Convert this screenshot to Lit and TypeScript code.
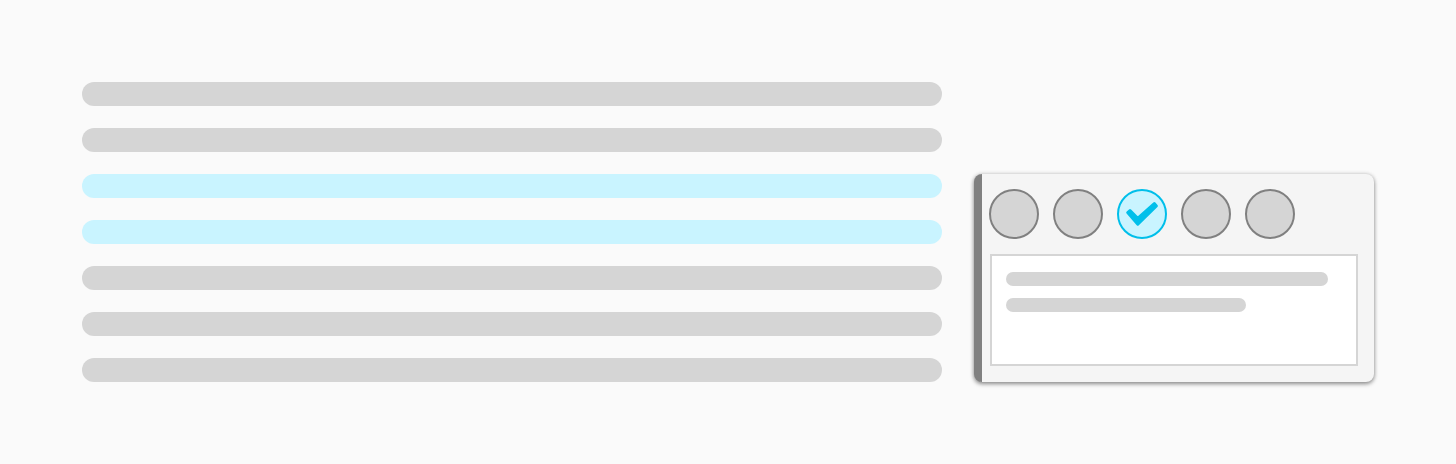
import { LitElement, html, css } from "lit";
import { customElement, state } from "lit/decorators.js";
import { classMap } from "lit/directives/class-map.js";

@customElement("app-root")
export class AppRoot extends LitElement {
  static styles = css`
    :host {
      display: block;
      box-sizing: border-box;
      min-height: 100vh;
      padding: 82px;
      background: #fafafa;
      font-family: "Liberation Sans", sans-serif;
    }
    .page {
      display: flex;
      align-items: flex-end;
      gap: 32px;
    }
    .lines {
      flex: 1;
      display: flex;
      flex-direction: column;
      gap: 22px;
    }
    .line {
      height: 24px;
      border-radius: 12px;
      background: #d5d5d5;
    }
    .line.marked {
      background: #c9f4ff;
    }
    .card {
      flex: none;
      box-sizing: border-box;
      width: 400px;
      padding: 15px 16px 16px 8px;
      border-left: 8px solid #808080;
      border-radius: 8px;
      background: #f5f5f5;
      box-shadow: 0 2px 4px rgba(0, 0, 0, 0.4), 0 0 4px rgba(0, 0, 0, 0.16);
    }
    .swatches {
      display: flex;
      gap: 14px;
      margin: 0 0 15px -1px;
    }
    .swatch {
      box-sizing: border-box;
      width: 50px;
      height: 50px;
      padding: 0;
      border: 2px solid #808080;
      border-radius: 50%;
      background: #d5d5d5;
      cursor: pointer;
    }
    .swatch.on {
      border-color: #00bfea;
      background: #c9f4ff;
    }
    .swatch svg {
      display: block;
      width: 46px;
      height: 46px;
    }
    .note {
      box-sizing: border-box;
      display: flex;
      flex-direction: column;
      gap: 12px;
      min-height: 112px;
      padding: 16px 28px 16px 14px;
      border: 2px solid #d5d5d5;
      background: #fff;
    }
    .text {
      height: 14px;
      border-radius: 7px;
      background: #d5d5d5;
    }
    .text.short {
      width: 240px;
    }
  `;

  @state() private selected = 2;

  private lines = [false, false, true, true, false, false, false];

  render() {
    return html`
      <main class="page">
        <div class="lines">
          ${this.lines.map((marked) => html`<div class=${classMap({ line: true, marked })}></div>`)}
        </div>
        <section class="card">
          <div class="swatches">
            ${[0, 1, 2, 3, 4].map((i) => {
              const on = i === this.selected;
              return html`<button
                type="button"
                class=${classMap({ swatch: true, on })}
                aria-label="Color ${i + 1}"
                aria-pressed=${on ? "true" : "false"}
                @click=${() => (this.selected = i)}
              >${on
                ? html`<svg viewBox="0 0 46 46" aria-hidden="true">
                    <path
                      d="M8.7 21.6 L11 19.6 L18.7 27.4 L35.3 12.6 L37.4 14.9 L18.8 33.2 Z"
                      fill="#00bfea" stroke="#00bfea" stroke-width="3" stroke-linejoin="round"
                    />
                  </svg>`
                : ""}</button>`;
            })}
          </div>
          <div class="note">
            <div class="text"></div>
            <div class="text short"></div>
          </div>
        </section>
      </main>
    `;
  }
}
